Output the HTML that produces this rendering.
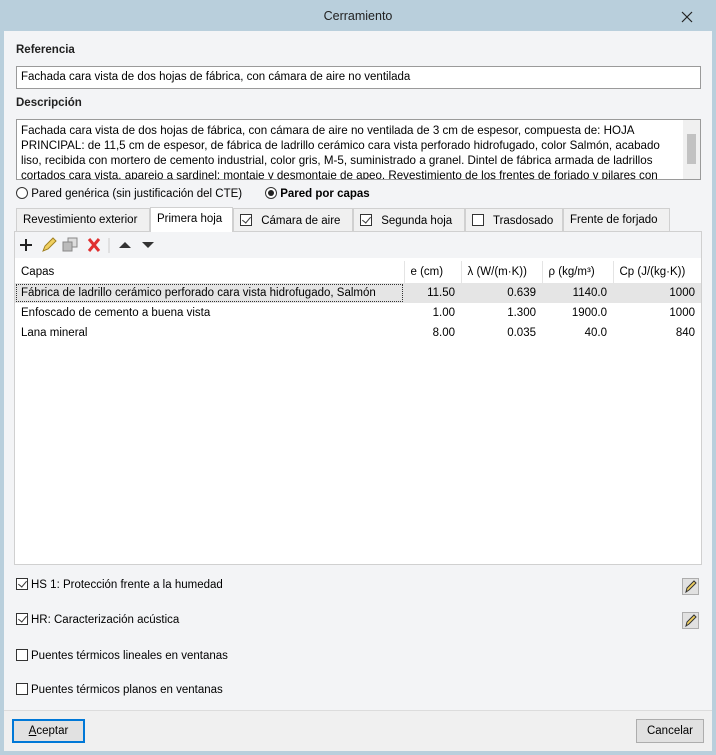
<!DOCTYPE html><html><head><style>
*{box-sizing:border-box}body{margin:0;width:716px;height:755px;background:#b9cfdc;font-family:"Liberation Sans",sans-serif;font-size:11.5px;color:#000;position:relative;overflow:hidden}
.a{position:absolute}
.win{left:4px;top:31px;width:708px;height:720px;background:#f3f4f6}
.lbl{font-weight:bold;font-size:11.5px;color:#222}
.inp{background:#fff;border:1px solid #9a9a9a}
.tab{position:absolute;top:208px;height:23px;border:1px solid #d0d0d0;border-bottom:none;background:#f0f0f0;padding:5px 6px 0;white-space:nowrap;font-size:11.5px}
.cb{display:inline-block;width:12px;height:12px;border:1px solid #333;background:#fff;vertical-align:-2px;margin-right:6px;position:relative}
.cb.c::after{content:"";position:absolute;left:3px;top:0px;width:4px;height:7px;border:solid #333;border-width:0 1.3px 1.3px 0;transform:rotate(40deg)}
table{border-collapse:collapse;font-size:11.5px}
td{padding:0 6px;height:20px;white-space:nowrap}
.h td{border-left:1px solid #e4e4e4}.h td:first-child{border-left:none}
.n{text-align:right}
.btn{position:absolute;top:719px;height:24px;border:1px solid #adadad;background:#e1e1e1;text-align:center;line-height:22px}
.pen{position:absolute;left:682px;width:17px;height:17px;border:1px solid #adadad;background:#e1e1e1}
</style></head><body>
<div class="a" style="left:0;top:9px;width:716px;text-align:center;font-size:12.5px;color:#222">Cerramiento</div>
<svg class="a" style="left:681px;top:11px" width="12" height="12"><path d="M1 1l10 10M11 1L1 11" stroke="#222" stroke-width="1.2"/></svg>
<div class="a win"></div>
<div class="a lbl" style="left:16px;top:44px">Referencia</div>
<div class="a inp" style="left:16px;top:66px;width:685px;height:23px;padding:4px 4px">Fachada cara vista de dos hojas de fábrica, con cámara de aire no ventilada</div>
<div class="a lbl" style="left:16px;top:97px">Descripción</div>
<div class="a inp" style="left:16px;top:119px;width:685px;height:61px;padding:3px 22px 0 4px;line-height:15px;overflow:hidden;font-size:11.6px">Fachada cara vista de dos hojas de fábrica, con cámara de aire no ventilada de 3 cm de espesor, compuesta de: HOJA PRINCIPAL: de 11,5 cm de espesor, de fábrica de ladrillo cerámico cara vista perforado hidrofugado, color Salmón, acabado liso, recibida con mortero de cemento industrial, color gris, M-5, suministrado a granel. Dintel de fábrica armada de ladrillos cortados cara vista, aparejo a sardinel; montaje y desmontaje de apeo. Revestimiento de los frentes de forjado y pilares con</div>
<div class="a" style="left:683px;top:120px;width:17px;height:59px;background:#f0f0f0"><div style="margin:14px 4px;height:30px;background:#c2c2c2"></div></div>
<div class="a" style="left:16px;top:187px"><span style="display:inline-block;width:12px;height:12px;border:1px solid #333;border-radius:50%;vertical-align:-2px;background:#fff"></span> Pared genérica (sin justificación del CTE)</div>
<div class="a" style="left:265px;top:187px;font-weight:bold"><span style="display:inline-block;width:12px;height:12px;border:1px solid #333;border-radius:50%;vertical-align:-2px;background:#fff;position:relative"><span style="position:absolute;left:2px;top:2px;width:6px;height:6px;border-radius:50%;background:#222"></span></span> Pared por capas</div>
<div class="tab" style="left:16px;width:134px">Revestimiento exterior</div>
<div class="tab" style="left:150px;width:83px;background:#fff;top:207px;height:25px;z-index:2">Primera hoja</div>
<div class="tab" style="left:233px;width:120px"><span class="cb c"></span> Cámara de aire</div>
<div class="tab" style="left:353px;width:112px"><span class="cb c"></span> Segunda hoja</div>
<div class="tab" style="left:465px;width:98px"><span class="cb"></span> Trasdosado</div>
<div class="tab" style="left:563px;width:107px">Frente de forjado</div>
<div class="a" style="left:14px;top:231px;width:688px;height:334px;border:1px solid #d0d0d0;background:#f3f4f6"></div>
<svg class="a" style="left:16px;top:235px" width="150" height="20">
<path d="M4 10h12M10 4v12" stroke="#222" stroke-width="2"/>
<path d="M27 16l2-5 8-8 3 3-8 8z" fill="#f0d060" stroke="#a08020"/>
<rect x="52" y="3" width="9" height="9" fill="#ddd" stroke="#888"/><rect x="47" y="7" width="9" height="9" fill="#bbb" stroke="#888"/>
<path d="M73 4l10 12M83 4l-10 12" stroke="#e03030" stroke-width="3"/>
<path d="M93 3v15" stroke="#ccc"/>
<path d="M103 13l6-6 6 6z" fill="#333"/><path d="M126 7l6 6 6-6z" fill="#333"/>
</svg>
<div class="a" style="left:15px;top:258px;width:686px;height:306px;background:#fff"></div>
<table class="a" style="left:15px;top:261px;width:686px">
<tr class="h" style="height:22px"><td style="width:389px">Capas</td><td style="width:57px">e (cm)</td><td style="width:81px">λ (W/(m·K))</td><td style="width:71px">ρ (kg/m³)</td><td>Cp (J/(kg·K))</td></tr>
<tr style="background:#e5e5e5"><td style="outline:1px dotted #333;outline-offset:-2px">Fábrica de ladrillo cerámico perforado cara vista hidrofugado, Salmón</td><td class="n">11.50</td><td class="n">0.639</td><td class="n">1140.0</td><td class="n">1000</td></tr>
<tr><td>Enfoscado de cemento a buena vista</td><td class="n">1.00</td><td class="n">1.300</td><td class="n">1900.0</td><td class="n">1000</td></tr>
<tr><td>Lana mineral</td><td class="n">8.00</td><td class="n">0.035</td><td class="n">40.0</td><td class="n">840</td></tr>
</table>
<div class="a" style="left:16px;top:578px"><span class="cb c" style="margin-right:3px"></span>HS 1: Protección frente a la humedad</div>
<div class="a" style="left:16px;top:613px"><span class="cb c" style="margin-right:3px"></span>HR: Caracterización acústica</div>
<div class="a" style="left:16px;top:649px"><span class="cb" style="margin-right:3px"></span>Puentes térmicos lineales en ventanas</div>
<div class="a" style="left:16px;top:683px"><span class="cb" style="margin-right:3px"></span>Puentes térmicos planos en ventanas</div>
<div class="pen" style="top:578px"><svg width="15" height="15"><path d="M3 13l1-4 7-7 2 2-7 7z" fill="#f0d060" stroke="#333"/></svg></div>
<div class="pen" style="top:612px"><svg width="15" height="15"><path d="M3 13l1-4 7-7 2 2-7 7z" fill="#f0d060" stroke="#333"/></svg></div>
<div class="a" style="left:4px;top:710px;width:708px;height:41px;background:#f0f0f0;border-top:1px solid #dcdcdc"></div>
<div class="btn" style="left:12px;width:73px;border:2px solid #0078d7;line-height:20px"><u>A</u>ceptar</div>
<div class="btn" style="left:636px;width:68px">Cancelar</div>
</body></html>
